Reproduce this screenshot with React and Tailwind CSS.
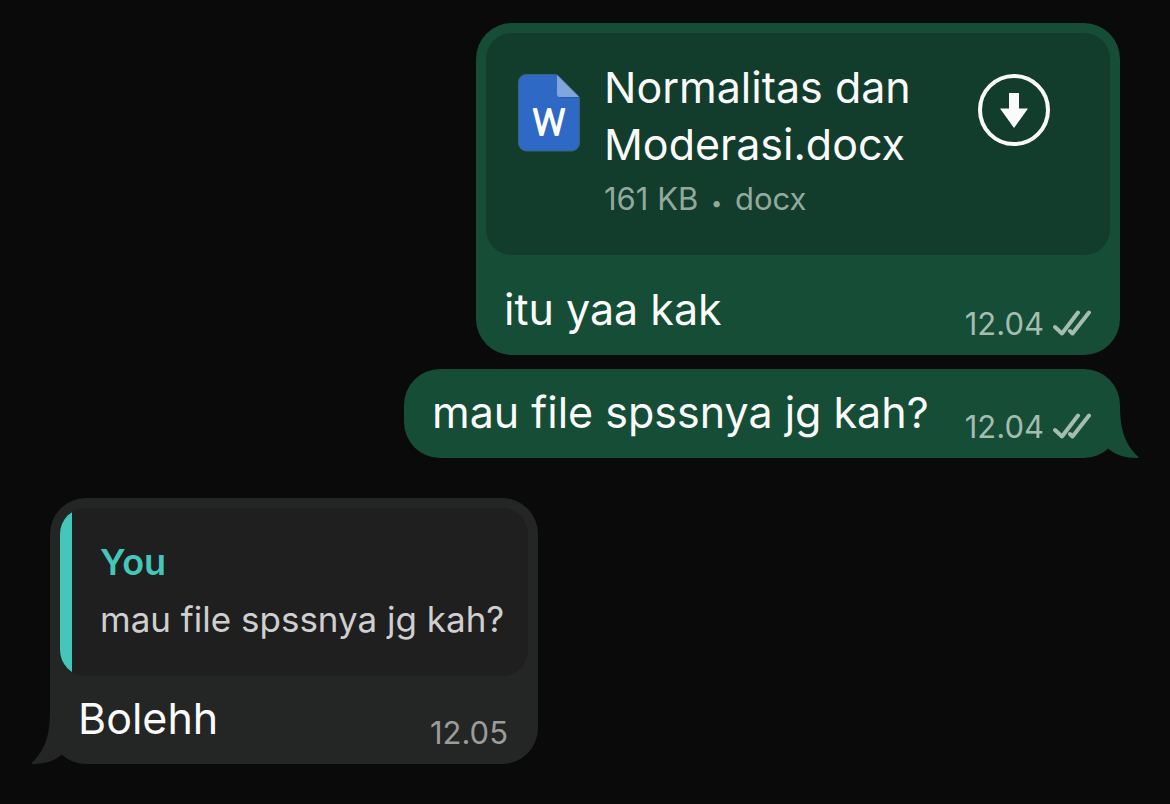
import clsx from "clsx";

const attachment = { name: "Normalitas dan Moderasi.docx", size: "161 KB", type: "docx" };

function WordIcon() {
  return (
    <svg width="64" height="80" viewBox="0 0 64 80" className="shrink-0" aria-hidden="true">
      <path
        d="M9 1.5H38Q40 1.5 41.500 3L61 22.500Q62.500 24 62.500 26V70A8 8 0 0 1 54.500 78H9.500A8 8 0 0 1 1.500 70V9A7.500 7.500 0 0 1 9 1.500Z"
        fill="#2f69c6"
        stroke="#3c6470"
        strokeWidth="1"
      />
      <path d="M40 2L62 24H43A3 3 0 0 1 40 21Z" fill="#83a5de" />
      <path d="M43 24.500H62" stroke="#285aa9" strokeWidth="1" />
      <text
        x="32"
        y="62"
        textAnchor="middle"
        fontFamily="Roboto, sans-serif"
        fontSize="36"
        fontWeight="300"
        fill="#fff"
        stroke="#fff"
        strokeWidth="2"
        strokeLinejoin="round"
      >
        W
      </text>
    </svg>
  );
}

function DownloadIcon() {
  return (
    <svg width="72" height="72" viewBox="0 0 72 72" aria-hidden="true">
      <circle cx="36" cy="36" r="34" fill="none" stroke="#fafafa" strokeWidth="4" />
      <path d="M31 19H41V34.500H50L36 54L22 34.500H31Z" fill="#fafafa" />
    </svg>
  );
}

function DoubleCheck() {
  return (
    <svg width="40" height="26" viewBox="0 0 40 26" className="mb-2 ml-2 shrink-0" role="img" aria-label="Delivered">
      <path
        d="M3 17L10 23.500L26 2.500M18 21L20.500 23.500L37 2.500"
        fill="none"
        stroke="#a5bcb1"
        strokeWidth="4"
        strokeLinecap="round"
        strokeLinejoin="round"
      />
    </svg>
  );
}

function Tail({ outgoing }) {
  return (
    <svg
      width="40"
      height="60"
      viewBox="0 0 40 60"
      aria-hidden="true"
      className={clsx(
        "absolute bottom-0",
        outgoing ? "-right-5 fill-[#154d37]" : "-left-5 -scale-x-100 fill-[#242625]"
      )}
    >
      <path d="M20 7C20 32 25 46 38 58.500Q39 60 37 60C25 60 16 57 8.500 51L0 42V7Z" />
    </svg>
  );
}

function Bubble({ outgoing, tail, className, children }) {
  return (
    <article
      className={clsx(
        "relative max-w-full rounded-[36px]",
        outgoing ? "self-end bg-[#154d37]" : "self-start bg-[#242625]",
        className
      )}
    >
      {tail && <Tail outgoing={outgoing} />}
      {children}
    </article>
  );
}

function MessageRow({ text, time, outgoing, className }) {
  return (
    <div
      className={clsx(
        "relative flex items-end justify-between gap-4 pb-[11px] pl-7",
        outgoing ? "pr-7" : "pr-[30px]",
        className
      )}
    >
      <p className="mb-1.5 text-[43px] leading-[57px]">{text}</p>
      <div className={clsx("flex items-end", outgoing ? "text-[#a5bcb1]" : "text-[#9b9c9b]")}>
        <time className="text-[31px] leading-10">{time}</time>
        {outgoing && <DoubleCheck />}
      </div>
    </div>
  );
}

export default function App() {
  return (
    <main className="flex min-h-screen flex-col bg-[#0a0a0a] px-[50px] pt-[23px] pb-10 font-['Inter',sans-serif] text-[#fafafa]">
      <Bubble outgoing className="w-[644px]">
        <div className="px-2.5 pt-2.5">
          <div className="flex items-start rounded-[26px] bg-[#123c2b] pt-[26px] pr-[60px] pb-9 pl-[31px]">
            <div className="mt-3.5">
              <WordIcon />
            </div>
            <div className="ml-[23px] min-w-0 flex-1">
              <h2 className="max-w-[340px] text-[43px] leading-[57px]">{attachment.name}</h2>
              <p className="mt-1.5 text-[31px] leading-10 text-[#92aa9e]">
                {attachment.size} <span className="mx-1 text-[20px] leading-none">•</span> {attachment.type}
              </p>
            </div>
            <button type="button" aria-label="Download" className="mt-[15px] shrink-0 cursor-pointer rounded-full">
              <DownloadIcon />
            </button>
          </div>
        </div>
        <MessageRow outgoing text="itu yaa kak" time="12.04" className="pt-[26px]" />
      </Bubble>

      <Bubble outgoing tail className="mt-3.5 w-[716px]">
        <MessageRow outgoing text="mau file spssnya jg kah?" time="12.04" className="pt-[15px]" />
      </Bubble>

      <Bubble tail className="mt-10 w-[488px]">
        <div className="relative px-2.5 pt-2.5">
          <blockquote className="flex overflow-hidden rounded-[26px] bg-[#1f1f1f]">
            <div className="w-3 shrink-0 bg-[#44c7b9]" />
            <div className="min-w-0 flex-1 pt-[26px] pb-7 pl-7 leading-[57px]">
              <p className="text-[36px] leading-[57px] font-semibold text-[#44c7b9]">You</p>
              <p className="text-[35px] leading-[57px] text-[#cfcfcf]">mau file spssnya jg kah?</p>
            </div>
          </blockquote>
        </div>
        <MessageRow text="Bolehh" time="12.05" className="pt-3.5" />
      </Bubble>
    </main>
  );
}
